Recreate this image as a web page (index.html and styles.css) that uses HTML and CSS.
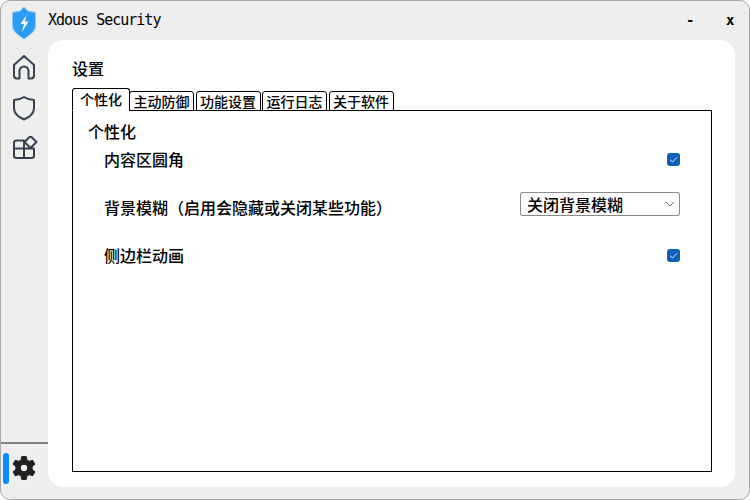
FILE: index.html
```html
<!DOCTYPE html>
<html lang="zh-CN">
<head>
  <meta charset="UTF-8">
  <meta name="viewport" content="width=device-width, initial-scale=1.0">
  <title>Xdous Security</title>
  <link rel="stylesheet" href="styles.css">
</head>
<body>
  <div class="window">
    <div class="titlebar">
      <svg class="logo" viewBox="0 0 26 34" width="26" height="34">
        <path d="M13 1 L17 5 L24.500 6.500 V20 C24.500 25 19 29 13 33 C7 29 1.500 25 1.500 20 V6.500 L9 5 Z" fill="#2b9bf4" stroke="#8ccbf7" stroke-width="1"/>
        <path d="M15.500 9 L9.500 18 H13 L11 26 L17.500 15.500 H14 Z" fill="#ffffff"/>
      </svg>
      <span class="app-name">Xdous Security</span>
      <div class="window-buttons">
        <span class="btn-min">-</span>
        <span class="btn-close">x</span>
      </div>
    </div>

    <div class="main">
      <div class="sidebar">
        <div class="nav">
          <svg class="nav-icon" viewBox="0 0 24 26" width="24" height="26">
            <path d="M2 11 L12 2 L22 11 V21.500 A3 3 0 0 1 19 24.500 H16.500 V17 A4.500 4.500 0 0 0 7.500 17 V24.500 H5 A3 3 0 0 1 2 21.500 Z"/>
          </svg>
          <svg class="nav-icon" viewBox="0 0 24 26" width="24" height="26">
            <path d="M12 2 C15 4 18.500 5 22 5 V13 C22 18.500 18 22 12 24.500 C6 22 2 18.500 2 13 V5 C5.500 5 9 4 12 2 Z"/>
          </svg>
          <svg class="nav-icon" viewBox="0 2 26 26" width="26" height="26">
            <path d="M4 6.500 H12 V14.500 H2 V8.500 A2 2 0 0 1 4 6.500 Z M2 14.500 H12 V24 H4.500 A2.500 2.500 0 0 1 2 21.500 Z M12 14.500 H22 V21.500 A2.500 2.500 0 0 1 19.500 24 H12 Z M18.500 2 L24.500 8 L18.500 14 L12.500 8 Z"/>
          </svg>
        </div>
        <div class="sidebar-bottom">
          <span class="indicator"></span>
          <svg class="gear" viewBox="0 0 24 24" width="26" height="26">
            <path d="M10 1.500 H14 L14.700 4.700 L16.800 5.900 L19.900 4.900 L21.900 8.300 L19.500 10.500 V13.500 L21.900 15.700 L19.900 19.100 L16.800 18.100 L14.700 19.300 L14 22.500 H10 L9.300 19.300 L7.200 18.100 L4.100 19.100 L2.100 15.700 L4.500 13.500 V10.500 L2.100 8.300 L4.100 4.900 L7.200 5.900 L9.300 4.700 Z M12 8.500 A3.500 3.500 0 1 0 12 15.500 A3.500 3.500 0 1 0 12 8.500 Z" fill="#222222" fill-rule="evenodd" stroke="#222222" stroke-width="1" stroke-linejoin="round"/>
          </svg>
        </div>
      </div>

      <div class="content">
        <div class="page-title">设置</div>
        <div class="tabs">
          <div class="tab active">个性化</div>
          <div class="tab">主动防御</div>
          <div class="tab">功能设置</div>
          <div class="tab">运行日志</div>
          <div class="tab">关于软件</div>
        </div>
        <div class="pane">
          <div class="group-title">个性化</div>
          <div class="row row-first">
            <span>内容区圆角</span>
            <span class="check">
              <svg viewBox="0 0 13 13" width="13" height="13"><path d="M3 6.800 L5.400 9 L10 4.200" fill="none" stroke="#dbe9f7" stroke-width="1"/></svg>
            </span>
          </div>
          <div class="row row-select">
            <span class="label-low">背景模糊（启用会隐藏或关闭某些功能）</span>
            <div class="select">
              <span>关闭背景模糊</span>
              <svg viewBox="0 0 10 6" width="10" height="6"><path d="M1 1 L5 5 L9 1" fill="none" stroke="#666666" stroke-width="1"/></svg>
            </div>
          </div>
          <div class="row row-last">
            <span>侧边栏动画</span>
            <span class="check">
              <svg viewBox="0 0 13 13" width="13" height="13"><path d="M3 6.800 L5.400 9 L10 4.200" fill="none" stroke="#dbe9f7" stroke-width="1"/></svg>
            </span>
          </div>
        </div>
      </div>
    </div>
  </div>
</body>
</html>
```

FILE: styles.css
```css
* {
  box-sizing: border-box;
}

body {
  margin: 0;
  padding: 0;
  font-family: "Noto Sans CJK SC", "Liberation Sans", sans-serif;
  font-size: 16px;
  font-weight: 500;
  color: #000;
  background-color: #fff;
}

.window {
  width: 750px;
  height: 500px;
  display: flex;
  flex-direction: column;
  background-color: #eeeeee;
  border: 1px solid #a9a9a9;
  border-radius: 10px;
  overflow: hidden;
}

.titlebar {
  height: 39px;
  display: flex;
  align-items: center;
  padding-left: 10px;
  flex-shrink: 0;
}

.logo {
  margin-top: 5px;
}

.app-name {
  margin-left: 11px;
  font-family: "DejaVu Sans Mono", monospace;
  font-size: 15px;
  letter-spacing: -1px;
  margin-top: -1px;
}

.window-buttons {
  margin-left: auto;
  display: flex;
  font-family: "DejaVu Sans Mono", monospace;
  font-weight: bold;
  font-size: 14px;
  margin-top: -2px;
}

.btn-min {
  width: 40px;
}

.btn-close {
  width: 23px;
}

.main {
  flex: 1;
  display: flex;
  min-height: 0;
}

.sidebar {
  width: 47px;
  display: flex;
  flex-direction: column;
  justify-content: space-between;
}

.nav {
  display: flex;
  flex-direction: column;
  align-items: flex-start;
  gap: 15px;
  padding-top: 14px;
  padding-left: 11px;
}

.nav-icon {
  fill: none;
  stroke: #38424f;
  stroke-width: 2;
  stroke-linejoin: round;
}

.sidebar-bottom {
  height: 57px;
  border-top: 2px solid #808080;
  display: flex;
  align-items: center;
  gap: 2px;
  padding-left: 2px;
  padding-bottom: 7px;
}

.indicator {
  width: 6px;
  height: 31px;
  border-radius: 3px;
  background-color: #0a8dff;
}

.gear {
  filter: drop-shadow(0 0 1px #fff);
}

.content {
  flex: 1;
  margin-right: 14px;
  margin-bottom: 12px;
  padding: 18px 23px 15px 24px;
  background-color: #fff;
  border-radius: 15px;
  display: flex;
  flex-direction: column;
}

.page-title {
  height: 20px;
  line-height: 20px;
  margin-bottom: 10px;
}

.tabs {
  display: flex;
  align-items: flex-end;
  gap: 1.500px;
  height: 23px;
  position: relative;
  z-index: 1;
}

.tab {
  width: 65px;
  height: 20px;
  line-height: 19px;
  text-align: center;
  font-size: 14px;
  border: 1px solid #000;
  border-radius: 3px 3px 0 0;
}

.tab.active {
  width: 58px;
  height: 23px;
  line-height: 21px;
  margin-right: -2.500px;
  border-bottom: 1px solid #fff;
  background-color: #fff;
}

.pane {
  flex: 1;
  margin-top: -1px;
  border: 1px solid #000;
  padding: 9px 31px 0 15px;
}

.group-title {
  height: 22px;
  line-height: 22px;
}

.row {
  display: flex;
  justify-content: space-between;
  align-items: center;
  padding-left: 16px;
}

.row-first {
  margin-top: 6px;
  height: 22px;
}

.row-select {
  margin-top: 22px;
  height: 24px;
}

.row-last {
  margin-top: 28px;
  height: 22px;
}

.label-low {
  margin-top: 6px;
  text-spacing-trim: space-all;
}

.check {
  width: 13px;
  height: 13px;
  border-radius: 3px;
  background-color: #0d5fb8;
  display: block;
}

.check svg {
  display: block;
}

.select {
  width: 160px;
  height: 24px;
  padding: 0 4px 0 6px;
  display: flex;
  justify-content: space-between;
  align-items: center;
  border: 1px solid #8a8a8a;
  border-radius: 2px;
  background-color: #fff;
}
```
